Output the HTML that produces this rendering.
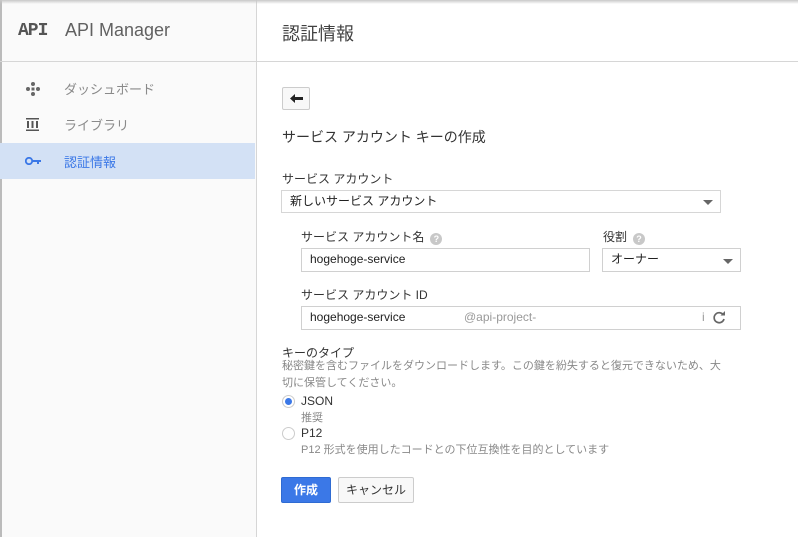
<!DOCTYPE html>
<html><head><meta charset="utf-8"><style>
*{box-sizing:border-box;margin:0;padding:0}
body{width:798px;height:537px;overflow:hidden;background:#fff;font-family:"Liberation Sans","Noto Sans CJK JP",sans-serif;position:relative;color:#212121}
.shadow{position:absolute;left:0;top:0;width:798px;height:4px;background:linear-gradient(#c8c8c8,rgba(255,255,255,0))}
.side{position:absolute;left:0;top:0;width:257px;height:537px;background:#fafafa;border-right:1px solid #d6d6d6;border-left:2px solid #bbb}
.hline{position:absolute;left:0;top:61px;width:798px;height:1px;background:#d6d6d6}
.abs{position:absolute;white-space:nowrap}
.nav{position:absolute;left:0;width:255px;height:36px;font-size:13px;color:#8a8a8a}
.nav span{position:absolute;left:64px;top:9px}
.inp{position:absolute;border:1px solid #d0d0d0;background:#fff;font-size:12px;height:24px;padding:0 8px;line-height:21px;white-space:nowrap}
.tri{position:absolute;width:0;height:0;border-left:5px solid transparent;border-right:5px solid transparent;border-top:5px solid #666}
.q{display:inline-block;width:12px;height:12px;border-radius:50%;background:#c8c8c8;color:#fff;font-size:9px;text-align:center;line-height:12px;margin-left:6px;vertical-align:-1px;font-weight:bold}
.lab{font-size:12px;color:#333}
.gray{color:#888;font-size:11px}
.radio{position:absolute;width:13px;height:13px;border-radius:50%;border:1px solid #ccc;background:#fff}
</style></head><body>
<div class="side"></div>
<div class="shadow"></div>
<div class="hline"></div>
<div class="abs" style="left:18px;top:21px;font-family:'Liberation Mono',monospace;font-weight:bold;font-size:18px;color:#555;letter-spacing:-1px">API</div>
<div class="abs" style="left:65px;top:20px;font-size:18px;color:#616161">API Manager</div>
<div class="abs" style="left:282px;top:20px;font-size:18px;color:#424242">認証情報</div>

<div class="nav" style="top:70px"><svg style="position:absolute;left:25px;top:11px" width="16" height="16" viewBox="0 0 16 16" fill="#666"><circle cx="8" cy="3" r="2"/><circle cx="8" cy="13" r="2"/><circle cx="3" cy="8" r="2"/><circle cx="13" cy="8" r="2"/><rect x="6.5" y="6.5" width="3" height="3"/></svg><span>ダッシュボード</span></div>
<div class="nav" style="top:106px"><svg style="position:absolute;left:26px;top:12px" width="13" height="13" viewBox="0 0 13 13" fill="#555"><rect x="0" y="0" width="13" height="1.5"/><rect x="0" y="11.5" width="13" height="1.5"/><rect x="1" y="3" width="2" height="7"/><rect x="5.5" y="3" width="2" height="7"/><rect x="10" y="3" width="2" height="7"/></svg><span>ライブラリ</span></div>
<div class="nav" style="top:143px;background:#d3e1f5;color:#3b78e7;height:36px"><svg style="position:absolute;left:25px;top:14px" width="16" height="8" viewBox="0 0 16 8" fill="#3b78e7"><circle cx="4" cy="4" r="3.2" fill="none" stroke="#3b78e7" stroke-width="1.8"/><rect x="7" y="3" width="9" height="2"/><rect x="12" y="3" width="2" height="4"/></svg><span>認証情報</span></div>

<div class="abs" style="left:282px;top:87px;width:28px;height:23px;border:1px solid #ccc;border-radius:2px;background:#f8f8f8"><svg style="position:absolute;left:7px;top:6px" width="13" height="9" viewBox="0 0 13 9"><path d="M0 4.5L5 0V3H13V6H5V9Z" fill="#222"/></svg></div>
<div class="abs" style="left:282px;top:127px;font-size:14px;color:#333">サービス アカウント キーの作成</div>
<div class="abs lab" style="left:282px;top:170px">サービス アカウント</div>
<div class="inp" style="left:281px;top:190px;width:440px;height:23px;border-color:#d6d6d6;line-height:20px">新しいサービス アカウント</div>
<div class="tri" style="left:703px;top:200px"></div>
<div class="abs lab" style="left:301px;top:228px">サービス アカウント名<span class="q">?</span></div>
<div class="abs lab" style="left:603px;top:228px">役割<span class="q">?</span></div>
<div class="inp" style="left:301px;top:248px;width:289px">hogehoge-service</div>
<div class="inp" style="left:602px;top:248px;width:139px">オーナー</div>
<div class="tri" style="left:723px;top:259px"></div>
<div class="abs lab" style="left:301px;top:286px">サービス アカウント ID</div>
<div class="inp" style="left:301px;top:306px;width:440px">hogehoge-service<span style="position:absolute;left:162px;color:#999">@api-project-</span><span style="position:absolute;left:400px;color:#999">i</span></div>
<svg class="abs" style="left:712px;top:311px" width="14" height="14" viewBox="0 0 14 14"><path d="M11.5 4.2A5 5 0 1 0 12 8" fill="none" stroke="#666" stroke-width="1.7"/><path d="M8.5 4.5H13V0Z" fill="#666"/></svg>

<div class="abs lab" style="left:282px;top:344px">キーのタイプ</div>
<div class="abs gray" style="left:282px;top:358px;line-height:17px;white-space:normal;width:440px">秘密鍵を含むファイルをダウンロードします。この鍵を紛失すると復元できないため、大切に保管してください。</div>
<div class="radio" style="left:282px;top:395px"><div style="position:absolute;left:2px;top:2px;width:7px;height:7px;border-radius:50%;background:#3b78e7"></div></div>
<div class="abs lab" style="left:301px;top:394px">JSON</div>
<div class="abs gray" style="left:301px;top:409px">推奨</div>
<div class="radio" style="left:282px;top:427px"></div>
<div class="abs lab" style="left:301px;top:426px">P12</div>
<div class="abs gray" style="left:301px;top:441px">P12 形式を使用したコードとの下位互換性を目的としています</div>
<div class="abs" style="left:281px;top:477px;width:50px;height:26px;background:#3b78e7;border:1px solid #2f6bd2;border-radius:2px;color:#fff;font-weight:bold;font-size:12px;text-align:center;line-height:24px">作成</div>
<div class="abs" style="left:338px;top:477px;width:76px;height:26px;background:#f8f8f8;border:1px solid #ccc;border-radius:2px;color:#333;font-size:12px;text-align:center;line-height:24px">キャンセル</div>
</body></html>
